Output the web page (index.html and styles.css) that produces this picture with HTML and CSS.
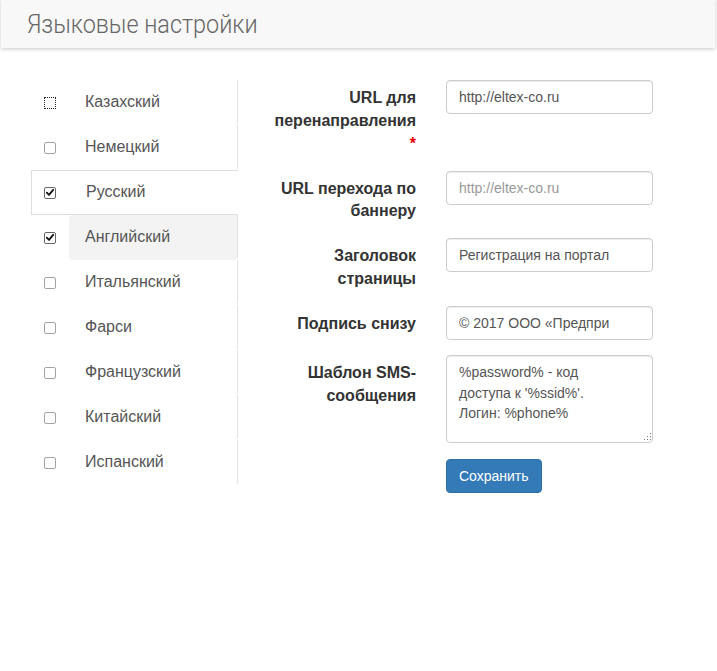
FILE: index.html
```html
<!DOCTYPE html>
<html lang="ru">
<head>
<meta charset="utf-8">
<title>Языковые настройки</title>
<link rel="stylesheet" href="styles.css">
</head>
<body>
<div class="page-header">
  <h1 class="page-title">Языковые настройки</h1>
</div>
<div class="content">
  <ul class="langs">
    <li class="lang"><span class="cb cb-focus"></span><a class="lang-link">Казахский</a></li>
    <li class="lang"><span class="cb"></span><a class="lang-link">Немецкий</a></li>
    <li class="lang lang-active"><span class="cb cb-checked"><svg viewBox="0 0 12 12" width="11" height="11"><path d="M2.2 6.2 L4.8 8.8 L9.8 2.8" fill="none" stroke="#111" stroke-width="2.2" stroke-linecap="round" stroke-linejoin="round"/></svg></span><a class="lang-link">Русский</a></li>
    <li class="lang"><span class="cb cb-checked"><svg viewBox="0 0 12 12" width="11" height="11"><path d="M2.2 6.2 L4.8 8.8 L9.8 2.8" fill="none" stroke="#111" stroke-width="2.2" stroke-linecap="round" stroke-linejoin="round"/></svg></span><a class="lang-link lang-hover">Английский</a></li>
    <li class="lang"><span class="cb"></span><a class="lang-link">Итальянский</a></li>
    <li class="lang"><span class="cb"></span><a class="lang-link">Фарси</a></li>
    <li class="lang"><span class="cb"></span><a class="lang-link">Французский</a></li>
    <li class="lang"><span class="cb"></span><a class="lang-link">Китайский</a></li>
    <li class="lang"><span class="cb"></span><a class="lang-link">Испанский</a></li>
  </ul>
  <form class="form">
    <div class="group">
      <label class="label">URL для перенаправления <span class="req">*</span></label>
      <div class="field"><input class="input" type="text" value="http://eltex-co.ru"></div>
    </div>
    <div class="group">
      <label class="label">URL перехода по баннеру</label>
      <div class="field"><input class="input" type="text" placeholder="http://eltex-co.ru"></div>
    </div>
    <div class="group">
      <label class="label">Заголовок страницы</label>
      <div class="field"><input class="input" type="text" value="Регистрация на портал"></div>
    </div>
    <div class="group">
      <label class="label">Подпись снизу</label>
      <div class="field"><input class="input" type="text" value="© 2017 ООО «Предпри"></div>
    </div>
    <div class="group">
      <label class="label">Шаблон SMS-сообщения</label>
      <div class="field field-area"><textarea class="input textarea">%password% - код
доступа к '%ssid%'.
Логин: %phone%</textarea><svg class="grip" width="10" height="10" viewBox="0 0 10 10"><g fill="#777"><rect x="8" y="1" width="1" height="1"/><rect x="8" y="4" width="1" height="1"/><rect x="5" y="4" width="1" height="1"/><rect x="8" y="7" width="1" height="1"/><rect x="5" y="7" width="1" height="1"/><rect x="2" y="7" width="1" height="1"/></g></svg></div>
    </div>
    <div class="group">
      <div class="label"></div>
      <div class="field"><button type="button" class="btn">Сохранить</button></div>
    </div>
  </form>
</div>
</body>
</html>
```
FILE: styles.css
```css
html, body {
  margin: 0;
  padding: 0;
  background: #fff;
}
body {
  font-family: "Liberation Sans", Arial, sans-serif;
  font-size: 14px;
  color: #333;
  width: 717px;
  height: 671px;
  overflow: hidden;
}
.page-header {
  height: 49px;
  margin: -1px 2px 0 1px;
  background: #f8f8f8;
  box-shadow: 0 1px 4px rgba(0, 0, 0, 0.22);
  display: flex;
  align-items: center;
}
.page-title {
  margin: 0 0 0 26px;
  font-family: Roboto, "Liberation Sans", sans-serif;
  font-weight: 300;
  font-size: 26px;
  color: #666;
  line-height: 30px;
  transform: scaleX(0.9);
  transform-origin: left center;
}
.content {
  display: flex;
  align-items: flex-start;
  padding-top: 32px;
}
.langs {
  list-style: none;
  margin: 0 0 0 31px;
  padding: 0;
  width: 207px;
}
.lang {
  display: flex;
  align-items: center;
  height: 45px;
  box-sizing: border-box;
  border: 1px solid transparent;
  border-right: 0;
  background: #fff;
}
.lang-active {
  border-color: #ddd;
}
.cb {
  flex: none;
  box-sizing: border-box;
  width: 12px;
  height: 12px;
  margin: 0 13px 0 12px;
  border: 1px solid #a3a3a3;
  border-radius: 2px;
  background: #fff;
  display: flex;
  align-items: center;
  justify-content: center;
}
.cb svg {
  display: block;
  margin-top: -1px;
}
.cb-checked {
  border-color: #666;
}
.cb-focus {
  border: 1px dotted #222;
  border-radius: 0;
}
.lang-link {
  flex: 1;
  align-self: stretch;
  display: flex;
  align-items: center;
  padding: 0 15px 0 16px;
  font-size: 16px;
  color: #555;
  border-right: 1px solid #e3e3e3;
  border-bottom: 1px solid transparent;
  border-radius: 0 0 4px 0;
  margin: -1px 0;
}
.lang-active .lang-link {
  border-right-color: transparent;
  margin: 0;
  padding-left: 17px;
}
.lang-hover {
  background: #f3f3f3;
  border-radius: 4px 0 4px 4px;
}
.form {
  margin: 0 0 0 28px;
  display: flex;
  flex-direction: column;
}
.group {
  display: flex;
  margin-bottom: 15px;
}
.label {
  width: 150px;
  flex: none;
  padding: 7px 15px 0 0;
  text-align: right;
  font-weight: bold;
  font-size: 16px;
  line-height: 22.86px;
  color: #333;
}
.req {
  color: #e00;
}
.field {
  padding-left: 15px;
  width: 207px;
}
.field-area {
  position: relative;
}
.grip {
  position: absolute;
  right: 1px;
  bottom: 1px;
}
.input {
  display: block;
  box-sizing: border-box;
  width: 207px;
  height: 34px;
  padding: 6px 12px;
  font-family: "Liberation Sans", Arial, sans-serif;
  font-size: 14px;
  color: #555;
  background: #fff;
  border: 1px solid #ccc;
  border-radius: 4px;
  box-shadow: inset 0 1px 1px rgba(0, 0, 0, 0.075);
  outline: none;
  margin: 0;
}
.input::placeholder {
  color: #999;
}
.textarea {
  height: 88px;
  line-height: 20.5px;
  padding: 6px 12px;
  resize: none;
  overflow: hidden;
}
.btn {
  display: block;
  height: 34px;
  padding: 6px 12px;
  font-family: "Liberation Sans", Arial, sans-serif;
  font-size: 14px;
  color: #fff;
  background: #337ab7;
  border: 1px solid #2e6da4;
  border-radius: 4px;
  margin-top: 1px;
}
```
